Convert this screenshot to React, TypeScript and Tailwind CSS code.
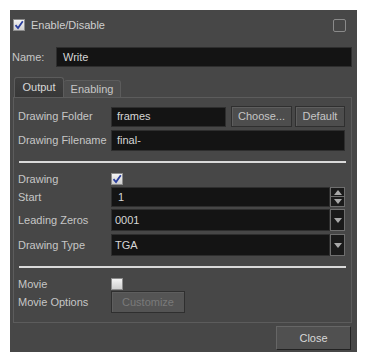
import React from 'react';

const font = { fontFamily: '"Liberation Sans", Arial, sans-serif' };

function Check({ checked }: { checked: boolean }) {
  return (
    <div className="w-[12px] h-[12px] border border-[#8c8c8c] bg-gradient-to-b from-[#f4f4f4] to-[#cfcfcf] flex items-center justify-center">
      {checked && (
        <svg width="10" height="10" viewBox="0 0 10 10">
          <path d="M1.5 5.2 L4 8 L8.8 1.2" fill="none" stroke="#2b3f9e" strokeWidth="1.8" />
        </svg>
      )}
    </div>
  );
}

function Field({ value, className }: { value: string; className: string }) {
  return (
    <div className={`bg-[#141414] border border-[#2e2e2e] flex items-center text-[#d6d6d6] ${className}`}>
      {value}
    </div>
  );
}

function Btn({ label, className }: { label: string; className: string }) {
  return (
    <div className={`bg-[#4d4d4d] border border-[#2f2f2f] shadow-[inset_1px_1px_0_#5e5e5e] flex items-center justify-center ${className}`}>
      {label}
    </div>
  );
}

function Arrow({ up }: { up?: boolean }) {
  return (
    <svg width="8" height="5" viewBox="0 0 8 5">
      <path d={up ? 'M0 5 L4 0 L8 5 Z' : 'M0 0 L8 0 L4 5 Z'} fill="#a8a8a8" />
    </svg>
  );
}

function ComboRow({ label, value, className }: { label: string; value: string; className: string }) {
  return (
    <div className={`flex h-[22px] ${className}`}>
      <span className="w-[97px] pl-[4px] leading-[22px]">{label}</span>
      <Field value={value} className="w-[219px] h-[22px] pl-[3px]" />
      <div className="w-[15px] h-[22px] bg-[#1a1a1a] border border-[#6e6e6e] flex items-center justify-center">
        <Arrow />
      </div>
    </div>
  );
}

export default function App() {
  return (
    <div className="w-[367px] h-[362px] bg-white pt-[10px] pl-[10px] text-[11px] text-[#c6c6c6]" style={font}>
      <div className="w-[347px] h-[342px] bg-[#474747] flex flex-col">
        <div className="h-[30px] flex items-center pl-[3px] pr-[11px]">
          <Check checked />
          <span className="ml-[6px] text-[#cfcfcf]">Enable/Disable</span>
          <div className="ml-auto w-[13px] h-[13px] border border-[#8a8a8a] rounded-[2px]" />
        </div>

        <div className="flex items-center mt-[7px] h-[20px]">
          <span className="w-[46px] pl-[2px]">Name:</span>
          <Field value="Write" className="w-[296px] h-[20px] pl-[6px]" />
        </div>

        <div className="flex items-end mt-[10px] ml-[4px] h-[20px]">
          <div className="w-[50px] h-[20px] bg-gradient-to-b from-[#404040] to-[#373737] border border-b-0 border-[#5c5c5c] rounded-t-[3px] flex items-center justify-center text-[#d8d8d8]">
            Output
          </div>
          <div className="w-[57px] h-[17px] bg-[#4e4e4e] border border-l-0 border-b-0 border-[#5c5c5c] rounded-t-[3px] flex items-center justify-center">
            Enabling
          </div>
        </div>

        <div className="ml-[3px] w-[339px] h-[226px] border border-[#5c5c5c] flex flex-col">
          <div className="flex items-center mt-[8px] h-[21px]">
            <span className="w-[97px] pl-[4px]">Drawing Folder</span>
            <Field value="frames" className="w-[115px] h-[20px] pl-[5px]" />
            <Btn label="Choose..." className="ml-[5px] w-[61px] h-[21px]" />
            <Btn label="Default" className="ml-[3px] w-[50px] h-[21px]" />
          </div>
          <div className="flex items-center mt-[3px] h-[21px]">
            <span className="w-[97px] pl-[4px]">Drawing Filename</span>
            <Field value="final-" className="w-[234px] h-[21px] pl-[5px]" />
          </div>

          <div className="mt-[10px] ml-[5px] w-[327px] h-[2px] bg-[#dadada]" />

          <div className="flex items-center mt-[9px] h-[14px]">
            <span className="w-[97px] pl-[4px]">Drawing</span>
            <Check checked />
          </div>
          <div className="flex mt-[1px] h-[20px]">
            <span className="w-[97px] pl-[4px] leading-[20px]">Start</span>
            <Field value="1" className="w-[219px] h-[20px] pl-[6px]" />
            <div className="flex flex-col w-[15px] h-[20px]">
              <div className="h-[10px] bg-[#1a1a1a] border border-[#6e6e6e] flex items-center justify-center">
                <Arrow up />
              </div>
              <div className="h-[10px] bg-[#1a1a1a] border border-t-0 border-[#6e6e6e] flex items-center justify-center">
                <Arrow />
              </div>
            </div>
          </div>
          <ComboRow label="Leading Zeros" value="0001" className="mt-[2px]" />
          <ComboRow label="Drawing Type" value="TGA" className="mt-[3px]" />

          <div className="mt-[10px] ml-[5px] w-[327px] h-[2px] bg-[#dadada]" />

          <div className="flex items-center mt-[9px] h-[14px]">
            <span className="w-[97px] pl-[4px]">Movie</span>
            <Check checked={false} />
          </div>
          <div className="flex items-center h-[22px]">
            <span className="w-[97px] pl-[4px]">Movie Options</span>
            <Btn label="Customize" className="w-[74px] h-[22px] text-[#7a7a7a] bg-[#545454]" />
          </div>
        </div>

        <div className="flex justify-end mt-[3px] pr-[6px]">
          <div className="w-[75px] h-[24px] bg-[#505050] border border-[#666] border-r-[#222] border-b-[#222] flex items-center justify-center text-[#d8d8d8]">
            Close
          </div>
        </div>
      </div>
    </div>
  );
}
